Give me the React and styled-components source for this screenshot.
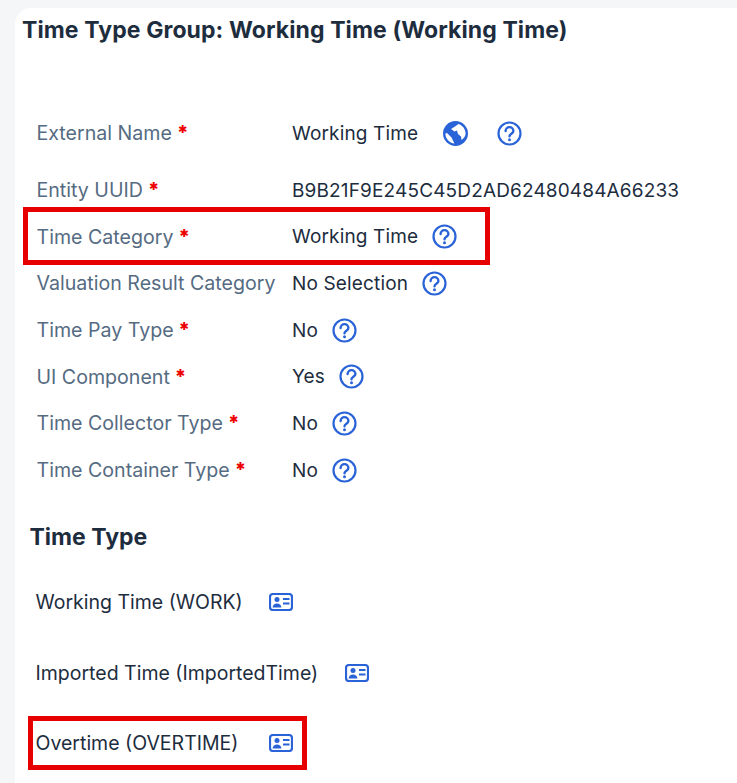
import React from 'react';
import styled, { createGlobalStyle } from 'styled-components';

const GlobalStyle = createGlobalStyle`
  html, body {
    margin: 0;
    padding: 0;
    background: #f5f6f7;
    overflow: hidden;
  }
`;

const Page = styled.div`
  position: relative;
  width: 737px;
  height: 783px;
  overflow: hidden;
  padding: 8px 0 0 15px;
  box-sizing: border-box;
  font-family: "Inter", "Noto Sans", sans-serif;
  color: #1d2d3e;
`;

const Card = styled.div`
  background: #fff;
  border-radius: 16px 0 0 0;
  height: 775px;
  padding: 7px 0 0 7px;
  box-sizing: border-box;
`;

const Title = styled.h1`
  margin: 0;
  font-size: 23px;
  line-height: 30px;
  font-weight: 700;
  letter-spacing: 0.1px;
  white-space: nowrap;
`;

const Form = styled.div`
  margin: 65px 0 0 14.5px;
`;

const Row = styled.div`
  display: flex;
  align-items: center;
  height: 46.7px;
  margin-bottom: ${(p) => p.$after || 0}px;
`;

const Label = styled.div`
  width: 255.5px;
  flex: none;
  font-size: 19.6px;
  color: #556b82;
  white-space: nowrap;
`;

const Required = styled.span`
  color: #e00;
  font-weight: 800;
  margin-left: 5px;
`;

const Value = styled.div`
  font-size: 19px;
  letter-spacing: 0.15px;
  white-space: nowrap;
`;

const IconSlot = styled.span`
  display: inline-flex;
  margin-left: ${(p) => p.$gap}px;
  color: #2a63d8;
`;

const SectionTitle = styled.h2`
  margin: 28px 0 0 7.5px;
  font-size: 23px;
  line-height: 30px;
  font-weight: 700;
`;

const TimeTypes = styled.div`
  margin: 35.5px 0 0 13.5px;
  display: flex;
  flex-direction: column;
  gap: 40.5px;
`;

const TimeType = styled.div`
  display: flex;
  align-items: center;
  height: 30px;
  font-size: 19.5px;
  white-space: nowrap;
`;

const Highlight = styled.div`
  position: absolute;
  left: ${(p) => p.$left}px;
  top: ${(p) => p.$top}px;
  width: ${(p) => p.$width}px;
  height: ${(p) => p.$height}px;
  border: 5px solid #e60000;
  box-sizing: border-box;
`;

const HelpIcon = () => (
  <svg width="25" height="25" viewBox="0 0 25 25" fill="none" stroke="currentColor">
    <circle cx="12.5" cy="12.5" r="11" strokeWidth="2.2" />
    <path d="M8.6 10a3.9 3.9 0 0 1 7.8 0c0 2.6-3.9 2.8-3.9 5.2" strokeWidth="2.4" strokeLinecap="round" />
    <circle cx="12.5" cy="18.8" r="1.5" fill="currentColor" stroke="none" />
  </svg>
);

const GlobeIcon = () => (
  <svg width="25" height="25" viewBox="0 0 25 25">
    <circle cx="12.5" cy="12.5" r="12.5" fill="currentColor" />
    <path d="M2.4 12.5 C2.4 17.8 6.4 22 11.4 22.6 L8.5 16.5 L4 12 Z" fill="#fff" />
    <path d="M15.5 2.9 L12 5.5 L8 8 L11.5 10.5 L14 9.5 L15 13 L18 15.5 L18.5 19 C21 17 22.6 15 22.6 12.5 C22.6 8 19.5 4.2 15.5 2.9 Z" fill="#fff" />
  </svg>
);

const CardIcon = () => (
  <svg width="24" height="18" viewBox="0 0 24 18" fill="none" stroke="currentColor">
    <rect x="1" y="1" width="22" height="16" rx="3" strokeWidth="2.2" />
    <circle cx="8" cy="6.6" r="2.5" fill="currentColor" stroke="none" />
    <path d="M3.6 14.5c0-5.5 8.8-5.5 8.8 0z" fill="currentColor" stroke="none" />
    <path d="M14 6h6.5M14 10.5h6.5" strokeWidth="2.2" />
  </svg>
);

const fields = [
  { label: 'External Name', required: true, value: 'Working Time', translatable: true, after: 10 },
  { label: 'Entity UUID', required: true, value: 'B9B21F9E245C45D2AD62480484A66233', noHelp: true },
  { label: 'Time Category', required: true, value: 'Working Time' },
  { label: 'Valuation Result Category', value: 'No Selection' },
  { label: 'Time Pay Type', required: true, value: 'No' },
  { label: 'UI Component', required: true, value: 'Yes' },
  { label: 'Time Collector Type', required: true, value: 'No' },
  { label: 'Time Container Type', required: true, value: 'No' },
];

const timeTypes = [
  { name: 'Working Time (WORK)', gap: 26 },
  { name: 'Imported Time (ImportedTime)', gap: 27 },
  { name: 'Overtime (OVERTIME)', gap: 31 },
];

export default function App() {
  return (
    <>
      <GlobalStyle />
      <Page>
        <Card>
          <Title>Time Type Group: Working Time (Working Time)</Title>
          <Form>
            {fields.map((f) => (
              <Row key={f.label} $after={f.after}>
                <Label>
                  {f.label}
                  {f.required && <Required>*</Required>}
                </Label>
                <Value>{f.value}</Value>
                {f.translatable && <IconSlot $gap={25}><GlobeIcon /></IconSlot>}
                {!f.noHelp && <IconSlot $gap={f.translatable ? 29 : 14}><HelpIcon /></IconSlot>}
              </Row>
            ))}
          </Form>
          <SectionTitle>Time Type</SectionTitle>
          <TimeTypes>
            {timeTypes.map((t) => (
              <TimeType key={t.name}>
                {t.name}
                <IconSlot $gap={t.gap}><CardIcon /></IconSlot>
              </TimeType>
            ))}
          </TimeTypes>
        </Card>
        <Highlight $left={23} $top={207} $width={467} $height={58} />
        <Highlight $left={28} $top={716} $width={279} $height={54} />
      </Page>
    </>
  );
}
